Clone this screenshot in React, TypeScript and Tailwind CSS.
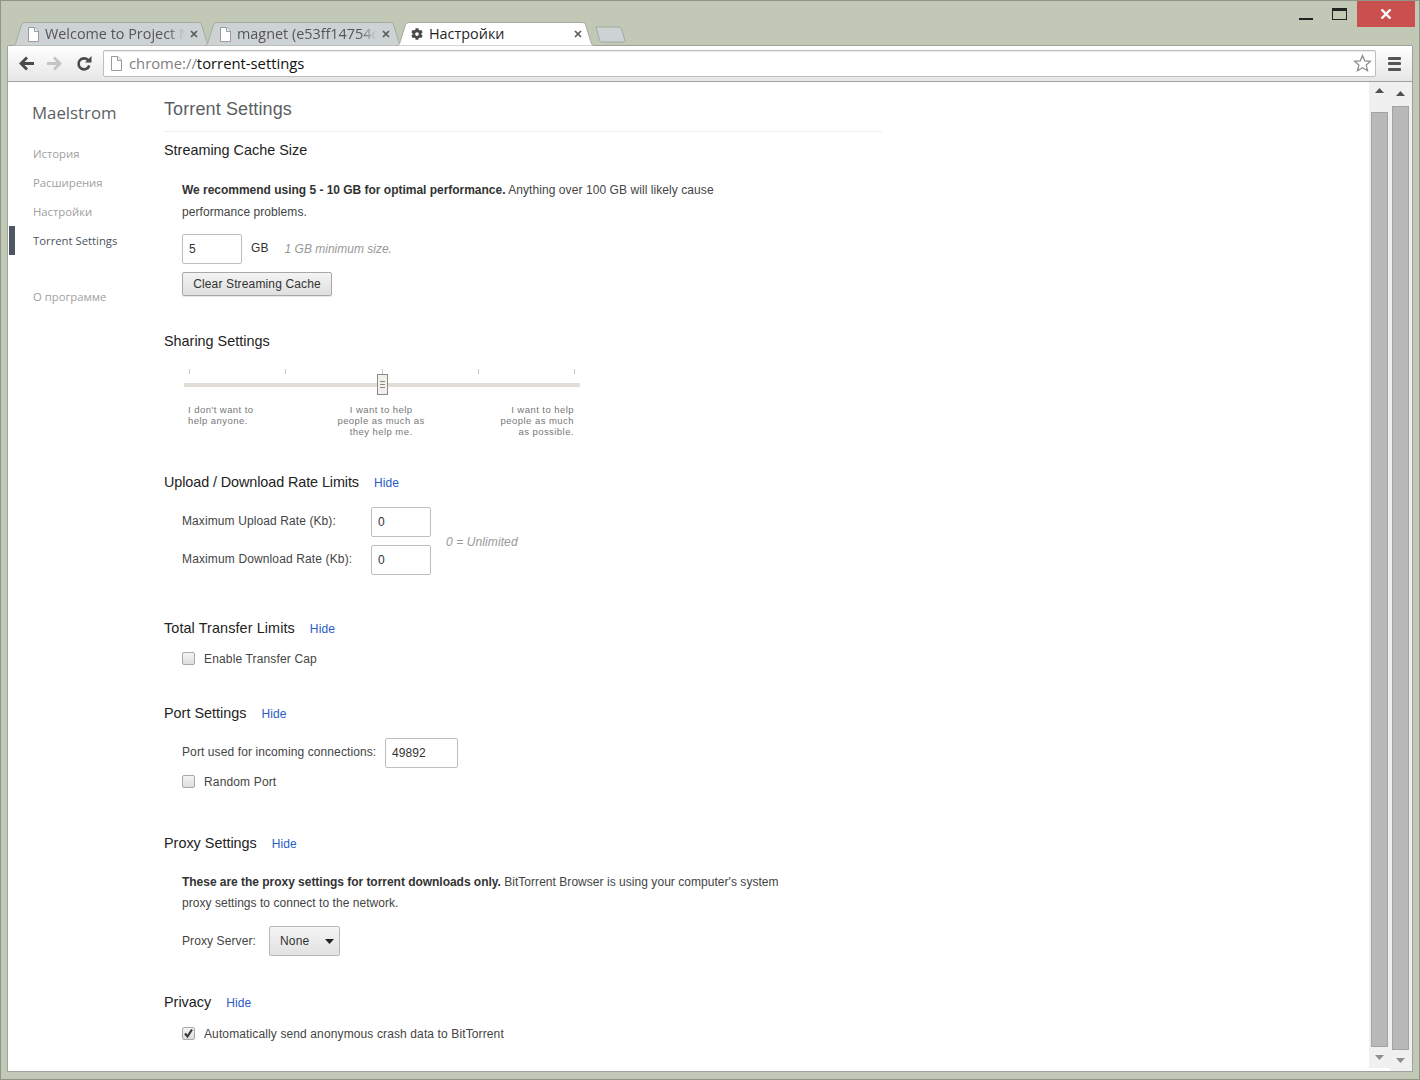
import React from 'react';
import { FaCog } from 'react-icons/fa';

const sansClass = "font-['Liberation_Sans',Arial,sans-serif]";

function FileIcon() {
  return (
    <svg width="13" height="15" viewBox="0 0 13 15" className="shrink-0">
      <path d="M1.5.5h6.5l3.5 3.5v10.500h-10z" fill="#fff" stroke="#9a9a9a" />
      <path d="M7.500.5v4h4" fill="#eee" stroke="#9a9a9a" />
    </svg>
  );
}

function TabClose({ color = '#5a5a5a' }: { color?: string }) {
  return (
    <svg width="8" height="8" viewBox="0 0 8 8" className="shrink-0">
      <path d="M1 1l6 6M7 1L1 7" stroke={color} strokeWidth="1.700" />
    </svg>
  );
}

function TabShape({ active }: { active?: boolean }) {
  return (
    <svg
      viewBox="0 0 199 24"
      preserveAspectRatio="none"
      className="absolute inset-0 h-full w-full"
    >
      <path
        d="M0 24C3 24 4 21 5 17L9 4C10 1 11 .5 14 .5H185C188 .5 189 1 190 4L194 17C195 21 196 24 199 24Z"
        fill={active ? '#ffffff' : '#cdd3d4'}
        stroke={active ? '#a5aaa0' : '#a3aa9e'}
        strokeWidth="1"
      />
    </svg>
  );
}

function Tab({
  title,
  active,
  icon,
}: {
  title: string;
  active?: boolean;
  icon: React.ReactNode;
}) {
  return (
    <div className={`relative -mr-[7px] flex h-[24px] w-[199px] items-center ${active ? 'z-10' : ''}`}>
      <TabShape active={active} />
      <div className="relative flex w-full items-center pl-[15px] pr-[13px]">
        {icon}
        <span
          className={`ml-[5px] mr-[5px] min-w-0 flex-1 overflow-hidden whitespace-nowrap font-['Open_Sans',sans-serif] text-[14.400px] leading-[20px] ${active ? 'text-[#1f1f1f]' : 'text-[#555] [mask-image:linear-gradient(to_right,#000_88%,transparent)]'}`}
        >
          {title}
        </span>
        <TabClose />
      </div>
    </div>
  );
}

function SectionTitle({
  children,
  hide,
  tracking = 'tracking-normal',
}: {
  children: React.ReactNode;
  hide?: boolean;
  tracking?: string;
}) {
  return (
    <div className={`flex items-baseline text-[14.400px] leading-[18px] text-[#222] ${tracking}`}>
      <span>{children}</span>
      {hide && <a className="ml-[15px] text-[12px] tracking-[0.1px] text-[#2a5bc4]">Hide</a>}
    </div>
  );
}

function TextBox({ value, width }: { value: string; width: string }) {
  return (
    <div
      className={`flex h-[30px] items-center rounded-[2px] border border-[#bfbfbf] bg-white pl-[6px] text-[12px] text-[#333] ${width}`}
    >
      {value}
    </div>
  );
}

function CheckBox({ checked }: { checked?: boolean }) {
  return (
    <div className="relative -mt-[2px] h-[13px] w-[13px] rounded-[2px] border border-[#a8a8a8] bg-gradient-to-b from-[#f4f4f4] to-[#dedede]">
      {checked && (
        <svg viewBox="0 0 13 13" className="absolute -left-px -top-px h-[13px] w-[13px]">
          <path d="M3 6.500l2.500 3L10 2.500" fill="none" stroke="#3a3a3a" strokeWidth="2.200" />
        </svg>
      )}
    </div>
  );
}

export default function App() {
  return (
    <div className={`flex h-[1080px] w-[1420px] flex-col overflow-hidden border border-[#8d9688] bg-[#c1c9b6] ${sansClass}`}>
      {/* title bar with tab strip */}
      <div className="relative h-[44px] shrink-0">
        <div className="absolute right-[72px] top-0 flex items-start">
          <div className="mr-[19px] mt-[17px] h-[2px] w-[14px] bg-[#222]" />
          <div className="mt-[7px] h-[12px] w-[15px] border border-[#222] border-t-[3px]" />
        </div>
        <div className="absolute right-[4px] top-0 flex h-[26px] w-[58px] items-center justify-center bg-[#c9504f]">
          <svg width="12" height="10" viewBox="0 0 12 10">
            <path d="M1.500 0.500l9 9M10.500 0.500l-9 9" stroke="#fff" strokeWidth="2.400" />
          </svg>
        </div>
        <div className="absolute left-[11px] top-[21px] flex items-end">
          <Tab title="Welcome to Project Maelstrom" icon={<FileIcon />} />
          <Tab title="magnet (e53ff14754c1d9" icon={<FileIcon />} />
          <Tab
            title="Настройки"
            active
            icon={<FaCog className="mr-px h-[12px] w-[12px] shrink-0 text-[#4a4a4a]" />}
          />
          <svg width="33" height="17" viewBox="0 0 33 17" className="mb-[3px] ml-[7px]">
            <path
              d="M1 1h23c1.500 0 2 .5 2.500 2l3 10c.5 2 0 3-2 3H7c-1.500 0-2-.5-2.500-2z"
              fill="#cdd3d4"
              stroke="#a3aa9e"
            />
          </svg>
        </div>
      </div>

      {/* browser window */}
      <div className="mx-[6px] mb-[7px] flex min-h-0 flex-1 flex-col overflow-hidden rounded-t-[2px] border border-[#9ea39a] bg-white">
        <div className="flex h-[36px] shrink-0 items-center border-b border-[#a1a1a1] bg-gradient-to-b from-white to-[#e6e6e6]">
          <div className="flex w-[95px] shrink-0 items-center pl-[10px]">
            <svg width="17" height="15" viewBox="0 0 17 15">
              <path d="M16 7.500H4M9 1.500L3 7.500l6 6" fill="none" stroke="#4a4a4a" strokeWidth="2.800" />
            </svg>
            <svg width="17" height="15" viewBox="0 0 17 15" className="ml-[11px]">
              <path d="M1 7.500h12M8 1.500l6 6-6 6" fill="none" stroke="#c4c4c4" strokeWidth="2.800" />
            </svg>
            <svg width="16" height="16" viewBox="0 0 16 16" className="ml-[13px]">
              <path d="M13.300 9.500A5.500 5.500 0 1 1 12 4" fill="none" stroke="#4a4a4a" strokeWidth="2.600" />
              <path d="M9 6.500h6.500V0z" fill="#4a4a4a" />
            </svg>
          </div>
          <div className="flex h-[27px] w-[1273px] shrink-0 items-center rounded-[2px] border border-[#bdbdbd] bg-white pl-[6px] pr-[3px] shadow-[inset_0_1px_1px_rgba(0,0,0,0.08)]">
            <FileIcon />
            <span className="ml-[6px] flex-1 pb-[2px] font-['Open_Sans',sans-serif] text-[14.800px] leading-[20px] text-[#111]">
              <span className="text-[#808080]">chrome://</span>torrent-settings
            </span>
            <svg width="19" height="19" viewBox="0 0 19 19">
              <path
                d="M9.500 1.500l2.300 5.300 5.700.5-4.300 3.800 1.300 5.600-5-3-5 3 1.300-5.600L1.500 7.300l5.700-.5z"
                fill="#fff"
                stroke="#8e8e8e"
                strokeWidth="1.300"
              />
            </svg>
          </div>
          <div className="ml-[12px] flex flex-col gap-[2.500px]">
            <div className="h-[3px] w-[13px] rounded-[1px] bg-[#555]" />
            <div className="h-[3px] w-[13px] rounded-[1px] bg-[#555]" />
            <div className="h-[3px] w-[13px] rounded-[1px] bg-[#555]" />
          </div>
        </div>

        <div className="flex min-h-0 flex-1">
          {/* sidebar */}
          <div className="w-[156px] shrink-0 font-['Open_Sans',sans-serif] text-[11.300px] leading-[18px] text-[#a0a0a0]">
            <div className="ml-[24px] mt-[19px] text-[16.800px] leading-[24px] text-[#5c6166]">Maelstrom</div>
            <div className="ml-[25px] mt-[20px]">История</div>
            <div className="ml-[25px] mt-[11px]">Расширения</div>
            <div className="ml-[25px] mt-[11px]">Настройки</div>
            <div className="ml-px mt-[5px] flex h-[29px] items-center border-l-[6px] border-[#4d5762] pl-[18px] text-[#4a5560]">
              Torrent Settings
            </div>
            <div className="ml-[25px] mt-[33px]">О программе</div>
          </div>

          {/* main */}
          <div className="min-w-0 flex-1 text-[12px] tracking-[0.1px] text-[#444]">
            <div className="w-[718px] border-b border-[#eeeeee] pb-[10px] pt-[15px] text-[18px] leading-[24px] tracking-[0.12px] text-[#5a5f64]">
              Torrent Settings
            </div>

            <div className="mt-[9px]">
              <SectionTitle>Streaming Cache Size</SectionTitle>
            </div>
            <div className="ml-[18px] mt-[20px] w-[560px] leading-[22px] tracking-[0.07px]">
              <b className="tracking-[-0.02px] text-[#333]">We recommend using 5 - 10 GB for optimal performance.</b> Anything over 100 GB will likely cause performance problems.
            </div>
            <div className="ml-[18px] mt-[11px] flex items-center">
              <TextBox value="5" width="w-[60px]" />
              <span className="ml-[9px] pb-[3px] text-[#333]">GB</span>
              <i className="ml-[16px] pb-[1px] tracking-normal text-[#999]">1 GB minimum size.</i>
            </div>
            <div className="ml-[18px] mt-[8px] flex h-[24px] w-[150px] items-center justify-center rounded-[2px] border border-[#a8a8a8] bg-gradient-to-b from-[#f4f4f4] to-[#dfdfdf] tracking-[0.14px] text-[#333] shadow-[0_1px_1px_rgba(0,0,0,0.1)]">
              Clear Streaming Cache
            </div>

            <div className="mt-[36px]">
              <SectionTitle>Sharing Settings</SectionTitle>
            </div>
            <div className="relative ml-[20px] mt-[19px] h-[35px] w-[396px]">
              <div className="flex justify-between px-[5px]">
                <div className="h-[5px] w-px bg-[#c8c8c8]" />
                <div className="h-[5px] w-px bg-[#c8c8c8]" />
                <div className="h-[5px] w-px bg-[#c8c8c8]" />
                <div className="h-[5px] w-px bg-[#c8c8c8]" />
                <div className="h-[5px] w-px bg-[#c8c8c8]" />
              </div>
              <div className="mt-[9px] h-[4px] bg-[#e0dcd6]" />
              <div className="absolute left-[193px] top-[5px] flex h-[21px] w-[11px] flex-col items-center justify-center gap-[2px] border border-[#8f8a80] bg-[#f2f0ec]">
                <div className="h-px w-[5px] bg-[#8f8a80]" />
                <div className="h-px w-[5px] bg-[#8f8a80]" />
                <div className="h-px w-[5px] bg-[#8f8a80]" />
              </div>
            </div>
            <div className="ml-[24px] flex w-[386px] justify-between text-[9.500px] leading-[11px] tracking-[0.45px] text-[#777]">
              <div>I don't want to<br />help anyone.</div>
              <div className="ml-[8px] text-center">I want to help<br />people as much as<br />they help me.</div>
              <div className="text-right">I want to help<br />people as much<br />as possible.</div>
            </div>

            <div className="mt-[36px]">
              <SectionTitle hide tracking="tracking-[-0.09px]">Upload / Download Rate Limits</SectionTitle>
            </div>
            <div className="ml-[18px] mt-[15px] flex items-center">
              <div className="flex flex-col gap-[8px]">
                <div className="flex items-center">
                  <span className="w-[189px] pb-[2px]">Maximum Upload Rate (Kb):</span>
                  <TextBox value="0" width="w-[60px]" />
                </div>
                <div className="flex items-center">
                  <span className="w-[189px] pb-[2px] tracking-[0.13px]">Maximum Download Rate (Kb):</span>
                  <TextBox value="0" width="w-[60px]" />
                </div>
              </div>
              <i className="ml-[15px] mt-[2px] text-[#999]">0 = Unlimited</i>
            </div>

            <div className="mt-[44px]">
              <SectionTitle hide tracking="tracking-[0.1px]">Total Transfer Limits</SectionTitle>
            </div>
            <div className="ml-[18px] mt-[12px] flex items-center">
              <CheckBox />
              <span className="ml-[9px] tracking-[0.15px]">Enable Transfer Cap</span>
            </div>

            <div className="mt-[36px]">
              <SectionTitle hide>Port Settings</SectionTitle>
            </div>
            <div className="ml-[18px] mt-[15px] flex items-center">
              <span className="w-[203px] pb-[2px]">Port used for incoming connections:</span>
              <TextBox value="49892" width="w-[73px]" />
            </div>
            <div className="ml-[18px] mt-[5px] flex items-center">
              <CheckBox />
              <span className="ml-[9px] tracking-[0.15px]">Random Port</span>
            </div>

            <div className="mt-[43px]">
              <SectionTitle hide>Proxy Settings</SectionTitle>
            </div>
            <div className="ml-[18px] mt-[19px] w-[610px] leading-[21px] tracking-[0.04px]">
              <b className="tracking-[-0.03px] text-[#333]">These are the proxy settings for torrent downloads only.</b> BitTorrent Browser is using your computer's system proxy settings to connect to the network.
            </div>
            <div className="ml-[18px] mt-[12px] flex items-center">
              <span className="w-[87px]">Proxy Server:</span>
              <div className="flex h-[30px] w-[71px] items-center rounded-[2px] border border-[#b8b8b8] bg-gradient-to-b from-[#f4f4f4] to-[#e2e2e2] pl-[10px] tracking-[0.2px] text-[#333]">
                None
                <svg width="9" height="5" viewBox="0 0 9 5" className="ml-[15px]">
                  <path d="M0 0h9L4.500 5z" fill="#222" />
                </svg>
              </div>
            </div>

            <div className="mt-[37px]">
              <SectionTitle hide>Privacy</SectionTitle>
            </div>
            <div className="ml-[18px] mt-[13px] flex items-center">
              <CheckBox checked />
              <span className="ml-[9px] tracking-[0.12px]">Automatically send anonymous crash data to BitTorrent</span>
            </div>
          </div>

          {/* scrollbars */}
          <div className="mb-[3px] flex w-[21px] flex-col items-start bg-[#f0f0f0]">
            <svg width="9" height="5" viewBox="0 0 9 5" className="ml-[6px] mt-[6px]">
              <path d="M0 5L4.500 0 9 5z" fill="#505050" />
            </svg>
            <div className="mb-[8px] ml-[2px] mt-[19px] w-[17px] flex-1 border border-[#a3a3a3] bg-[#b9b9b9]" />
            <svg width="9" height="5" viewBox="0 0 9 5" className="mb-[8px] ml-[6px]">
              <path d="M0 0L4.500 5 9 0z" fill="#8f8f8f" />
            </svg>
          </div>
          <div className="flex w-[22px] flex-col items-start bg-[#f0f0f0]">
            <svg width="9" height="5" viewBox="0 0 9 5" className="ml-[6px] mt-[9px]">
              <path d="M0 5L4.500 0 9 5z" fill="#505050" />
            </svg>
            <div className="mb-[8px] ml-[2px] mt-[10px] w-[17px] flex-1 border border-[#a3a3a3] bg-[#b9b9b9]" />
            <svg width="9" height="5" viewBox="0 0 9 5" className="mb-[8px] ml-[6px]">
              <path d="M0 0L4.500 5 9 0z" fill="#8f8f8f" />
            </svg>
          </div>
        </div>
      </div>
    </div>
  );
}
